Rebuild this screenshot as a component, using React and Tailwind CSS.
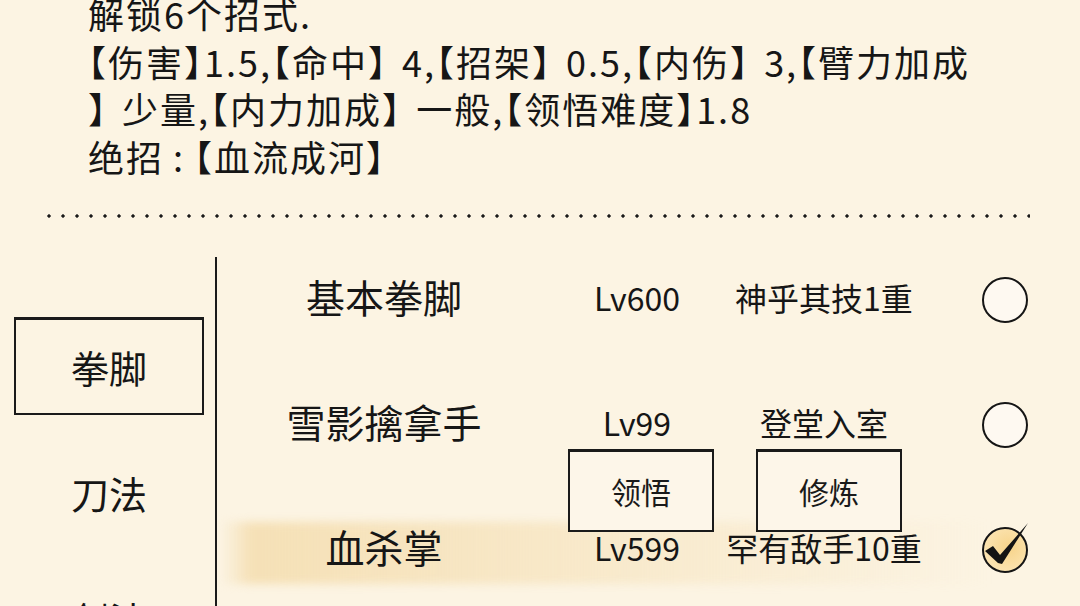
import React from "react";

const skills = [
  { name: "基本拳脚", level: "Lv600", grade: "神乎其技1重", checked: false },
  { name: "雪影擒拿手", level: "Lv99", grade: "登堂入室", checked: false },
  { name: "血杀掌", level: "Lv599", grade: "罕有敌手10重", checked: true, active: true },
];

const tabs = ["拳脚", "刀法", "剑法"];

const Radio = ({ checked }) => {
  if (!checked) {
    return <div className="w-[46px] h-[46px] rounded-full border-2 border-[#151515] bg-[#fef9f1]" />;
  }
  return (
    <div className="relative w-[46px] h-[46px] rounded-full border-2 border-[#151515] bg-[radial-gradient(circle_at_60%_45%,#f7d48a,#fbe3b0_70%)]">
      <svg className="absolute -left-[2px] -top-[2px] overflow-visible" width="46" height="46" viewBox="0 0 46 46">
        <path d="M3 24 L11 19 L18 28 L46 -4 L20 37 L16 36 Z" fill="#141414" />
      </svg>
    </div>
  );
};

const SkillRow = ({ skill }) => (
  <div className="relative grid grid-cols-[334px_172px_202px_1fr] items-center h-[125px]">
    {skill.active && (
      <div className="absolute left-[4px] top-[38px] w-[770px] h-[62px] bg-gradient-to-r from-transparent via-[#f5e0b6] via-[4%] to-transparent blur-[4px]" />
    )}
    <div className="relative text-center text-[39px]">{skill.name}</div>
    <div className="relative text-center text-[32px]">{skill.level}</div>
    <div className="relative text-center text-[32px]">{skill.grade}</div>
    <div className="relative pl-[57px] pt-[6px]">
      <Radio checked={skill.checked} />
    </div>
  </div>
);

const ActionButton = ({ label, className }) => (
  <button
    className={
      "absolute w-[146px] h-[83px] bg-[#fdf6e9] border-2 border-t-[3px] border-[#1a1a1a] text-[30px] text-[#1a1a1a] " +
      className
    }
  >
    {label}
  </button>
);

export default function App() {
  return (
    <div
      className="relative w-[1080px] h-[606px] overflow-hidden bg-[#fcf4e3] text-[#161616]"
      style={{ fontFamily: '"Noto Sans CJK SC", "Noto Sans", sans-serif' }}
    >
      {/* martial art description */}
      <div className="-mt-[10px] pl-[88px] text-[36px] leading-[47.5px] tracking-[2px] whitespace-pre [font-feature-settings:'halt'] [word-spacing:4px]">
        <div>解锁6个招式.</div>
        <div>【伤害】1.5,【命中】 4,【招架】 0.5,【内伤】 3,【臂力加成</div>
        <div>】 少量,【内力加成】 一般,【领悟难度】1.8</div>
        <div>
          绝招<span className="mx-[9px]">:</span>【血流成河】
        </div>
      </div>

      {/* dotted divider */}
      <div className="mt-[34px] ml-[42px] w-[988px] h-[4px] bg-[radial-gradient(circle,#1a1a1a_1.4px,transparent_1.9px)] bg-[length:14px_4px] bg-repeat-x" />

      <div className="flex mt-[16px] h-[400px]">
        {/* category tabs */}
        <div className="w-[217px] shrink-0 mt-[23px] border-r-2 border-[#1a1a1a] pt-[60px] flex flex-col gap-[28px]">
          {tabs.map((tab, i) => (
            <div
              key={tab}
              className={
                i === 0
                  ? "shrink-0 ml-[14px] w-[190px] h-[98px] flex items-center justify-center border-2 border-t-[3px] border-[#1a1a1a] text-[38px]"
                  : "shrink-0 ml-[14px] w-[190px] h-[98px] flex items-center justify-center text-[38px]"
              }
            >
              {tab}
            </div>
          ))}
        </div>

        {/* skill list */}
        <div className="relative flex-1">
          {skills.map((s) => (
            <SkillRow key={s.name} skill={s} />
          ))}
          <ActionButton label="领悟" className="left-[351px] top-[215px]" />
          <ActionButton label="修炼" className="left-[539px] top-[215px]" />
        </div>
      </div>
    </div>
  );
}
